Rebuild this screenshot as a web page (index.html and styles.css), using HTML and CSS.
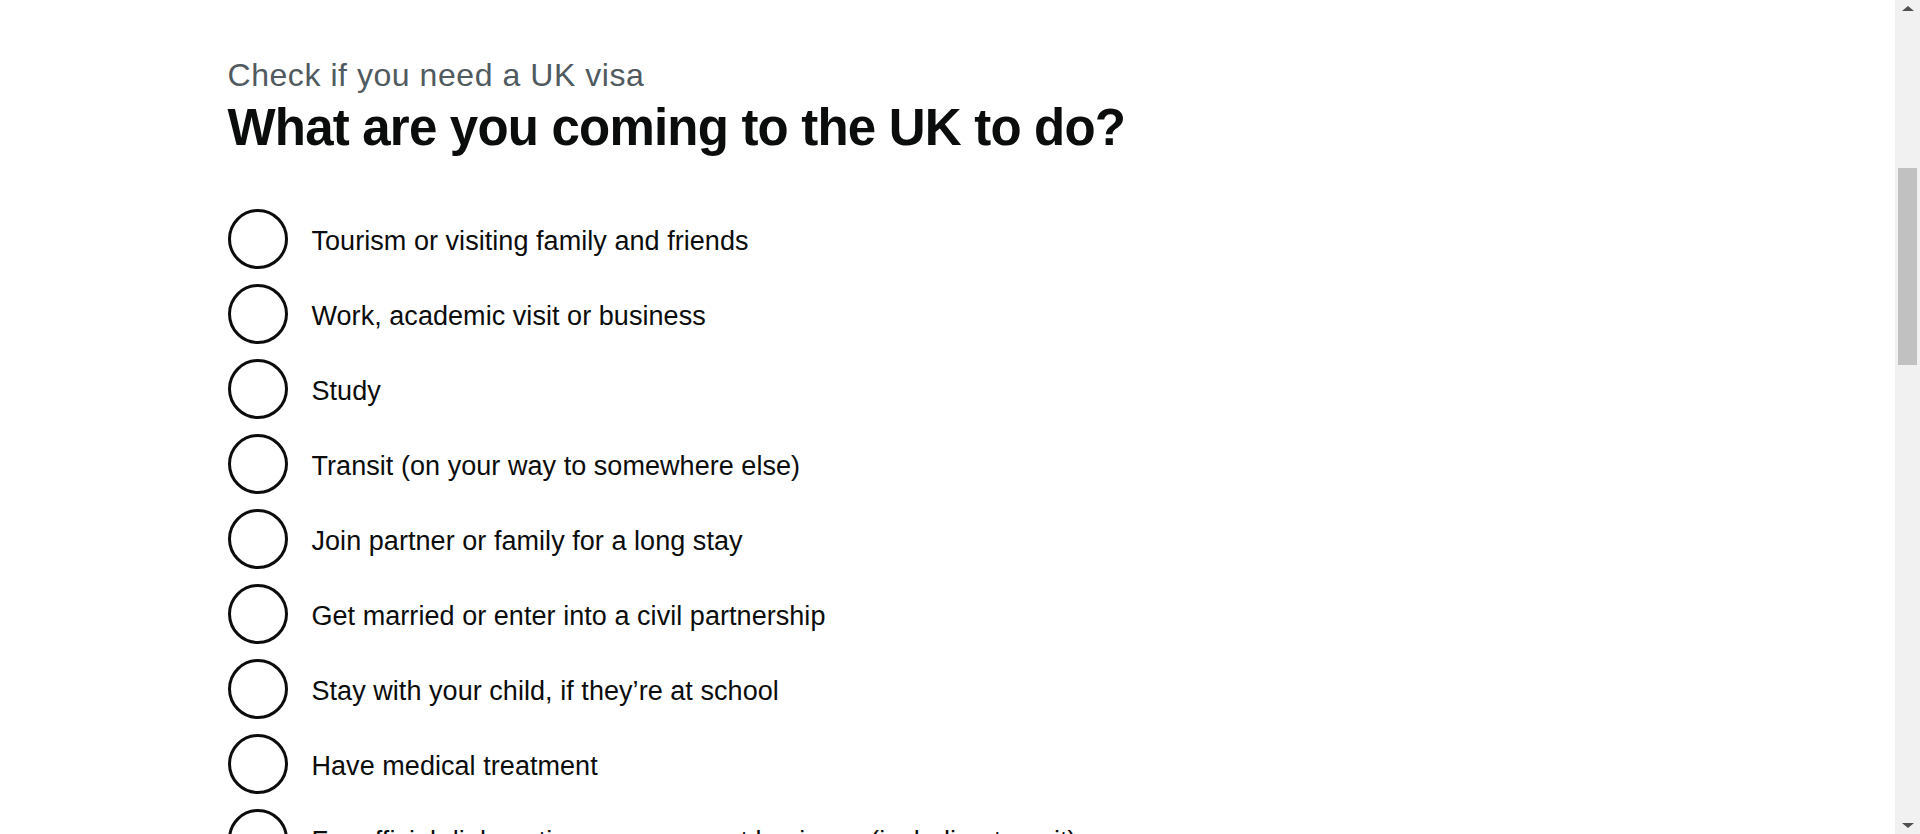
FILE: index.html
```html
<!DOCTYPE html>
<html lang="en">
<head>
<meta charset="utf-8">
<title>Check if you need a UK visa</title>
<link rel="stylesheet" href="styles.css">
</head>
<body>
<div class="page">
  <main class="main">
    <div class="container">
      <form class="question">
        <fieldset class="fieldset">
          <legend class="legend">
            <span class="caption">Check if you need a UK visa</span>
            <h1 class="heading">What are you coming to the UK to do?</h1>
          </legend>
          <div class="radios">
            <label class="radio-item"><input class="radio-input" type="radio" name="purpose"><span class="radio-label">Tourism or visiting family and friends</span></label>
            <label class="radio-item"><input class="radio-input" type="radio" name="purpose"><span class="radio-label">Work, academic visit or business</span></label>
            <label class="radio-item"><input class="radio-input" type="radio" name="purpose"><span class="radio-label">Study</span></label>
            <label class="radio-item"><input class="radio-input" type="radio" name="purpose"><span class="radio-label">Transit (on your way to somewhere else)</span></label>
            <label class="radio-item"><input class="radio-input" type="radio" name="purpose"><span class="radio-label">Join partner or family for a long stay</span></label>
            <label class="radio-item"><input class="radio-input" type="radio" name="purpose"><span class="radio-label">Get married or enter into a civil partnership</span></label>
            <label class="radio-item"><input class="radio-input" type="radio" name="purpose"><span class="radio-label">Stay with your child, if they’re at school</span></label>
            <label class="radio-item"><input class="radio-input" type="radio" name="purpose"><span class="radio-label">Have medical treatment</span></label>
            <label class="radio-item"><input class="radio-input" type="radio" name="purpose"><span class="radio-label">For official diplomatic or government business (including transit)</span></label>
            <label class="radio-item"><input class="radio-input" type="radio" name="purpose"><span class="radio-label">Something else</span></label>
          </div>
        </fieldset>
      </form>
    </div>
  </main>
  <div class="scrollbar" aria-hidden="true">
    <span class="scroll-arrow scroll-arrow-up"></span>
    <div class="scroll-track"><div class="scroll-thumb"></div></div>
    <span class="scroll-arrow scroll-arrow-down"></span>
  </div>
</div>
</body>
</html>
```

FILE: styles.css
```css
html, body {
  margin: 0;
  padding: 0;
  height: 834px;
  overflow: hidden;
  background: #ffffff;
}

body {
  font-family: "Liberation Sans", Arial, sans-serif;
  color: #0b0c0c;
}

.page {
  display: flex;
  height: 834px;
}

.main {
  flex: 1;
  min-width: 0;
  overflow: hidden;
}

.container {
  max-width: 1440px;
  margin: 0 auto;
  padding-top: 57px;
}

.question {
  margin: 0;
}

.fieldset {
  margin: 0;
  padding: 0;
  border: 0;
  min-width: 0;
}

.legend {
  padding: 0;
  margin: 0 0 51px 0;
  display: block;
}

.caption {
  display: block;
  font-size: 32px;
  line-height: 36px;
  color: #505a5f;
  letter-spacing: 0.55px;
  margin-bottom: 5px;
}

.heading {
  margin: 0;
  font-size: 51px;
  line-height: 60px;
  font-weight: 700;
  letter-spacing: -0.8px;
  color: #0b0c0c;
}

.radios {
  display: flex;
  flex-direction: column;
  gap: 15px;
}

.radio-item {
  display: flex;
  align-items: center;
  min-height: 60px;
  cursor: pointer;
}

.radio-input {
  appearance: none;
  -webkit-appearance: none;
  flex: 0 0 auto;
  width: 60px;
  height: 60px;
  margin: 0;
  border: 3px solid #0b0c0c;
  border-radius: 50%;
  background: #ffffff;
  box-sizing: border-box;
}

.radio-label {
  margin-left: 24px;
  font-size: 27px;
  line-height: 56px;
  padding-top: 3px;
  letter-spacing: 0.05px;
  white-space: nowrap;
}

.scrollbar {
  flex: 0 0 25px;
  width: 25px;
  background: #f1f1f1;
  display: flex;
  flex-direction: column;
  align-items: center;
}

.scroll-arrow {
  flex: 0 0 auto;
  width: 0;
  height: 0;
  border-left: 6px solid transparent;
  border-right: 6px solid transparent;
}

.scroll-arrow-up {
  margin-top: 6px;
  border-bottom: 5px solid #505050;
}

.scroll-arrow-down {
  margin-bottom: 6px;
  border-top: 5px solid #505050;
}

.scroll-track {
  flex: 1;
  width: 100%;
  display: flex;
  justify-content: center;
}

.scroll-thumb {
  width: 19px;
  height: 197px;
  margin-top: 157px;
  background: #c1c1c1;
}
```
